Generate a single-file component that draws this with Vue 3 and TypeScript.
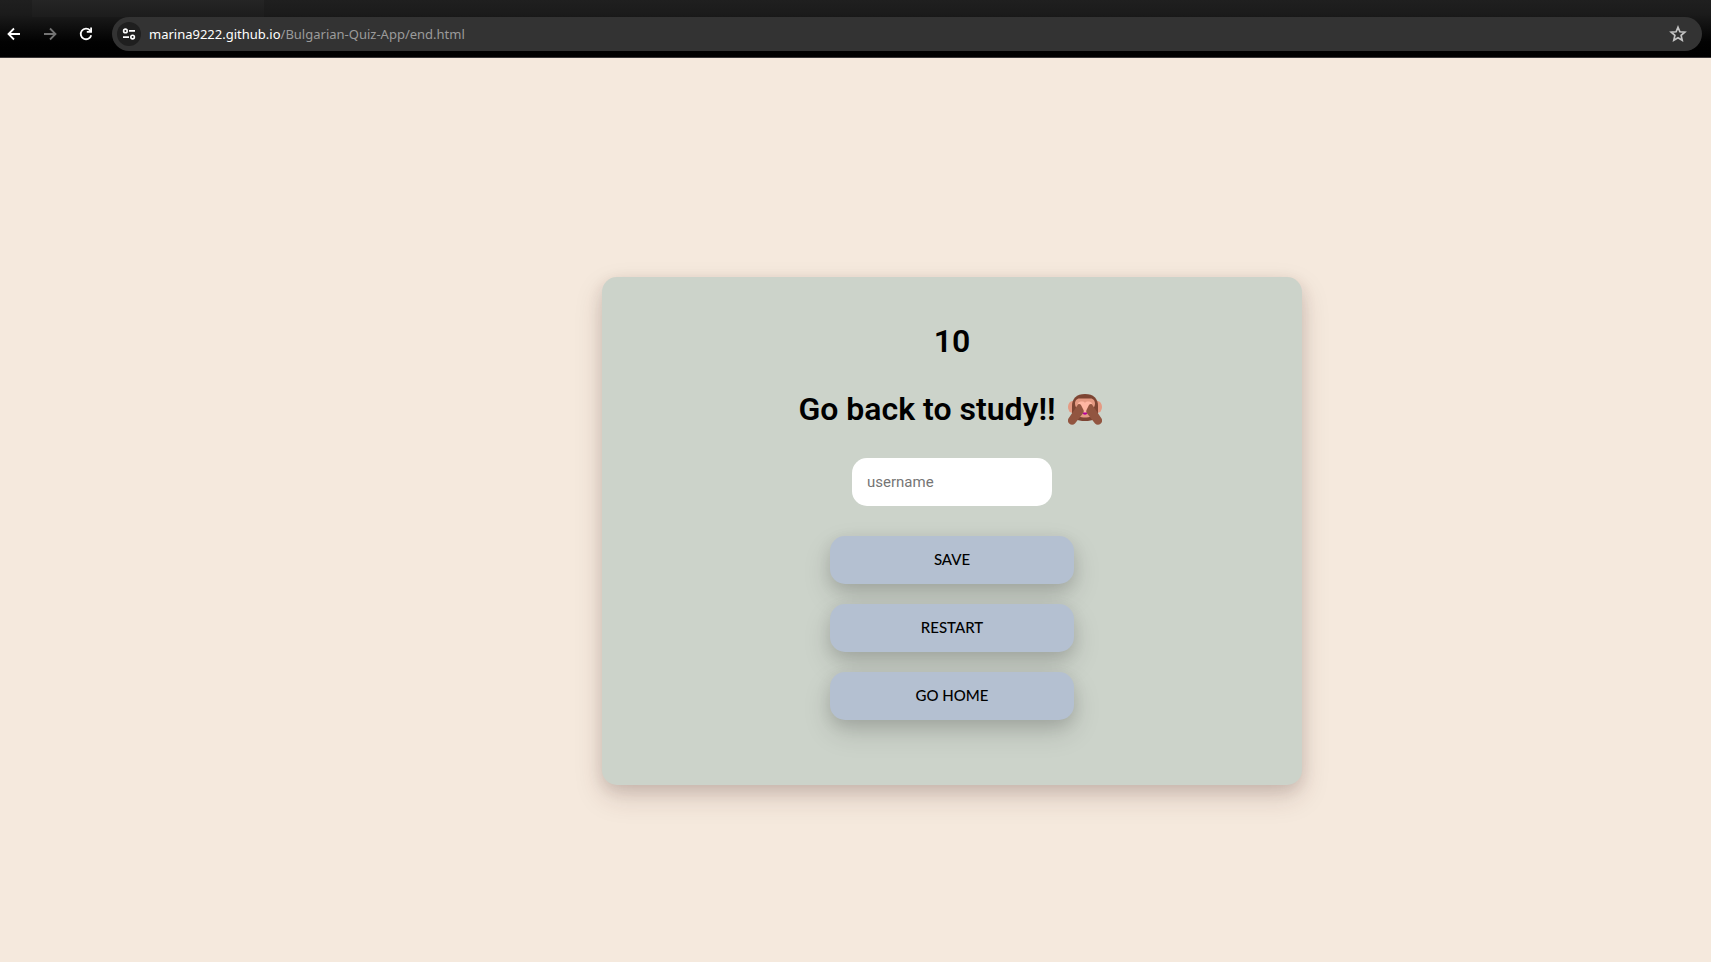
<script setup lang="ts">
import { ref } from 'vue'

const score = ref(10)
const username = ref('')
</script>

<template>
  <div class="browser">
    <header class="toolbar">
      <div class="tabstrip"><span class="tab"></span></div>
      <nav class="controls" aria-label="Browser">
        <div class="history">
          <button class="nav" type="button" aria-label="Back">
            <svg width="16" height="16" viewBox="0 0 16 16"><path d="M14 8H3M8 2.5 2.5 8 8 13.5" fill="none" stroke="#fff" stroke-width="1.8" /></svg>
          </button>
          <button class="nav" type="button" aria-label="Forward">
            <svg width="16" height="16" viewBox="0 0 16 16"><path d="M2 8h11M8 2.5 13.5 8 8 13.5" fill="none" stroke="#737373" stroke-width="1.8" /></svg>
          </button>
          <button class="nav" type="button" aria-label="Reload">
            <svg width="16" height="16" viewBox="0 0 16 16"><path d="M13.2 9.2A5.3 5.3 0 1 1 12 4.4l1 1.3" fill="none" stroke="#fff" stroke-width="1.8" /><path d="M14 1.6v5.2H8.8V5.1h3.4V1.6z" fill="#fff" /></svg>
          </button>
        </div>
        <div class="address">
          <button class="site" type="button" aria-label="View site information">
            <svg width="14" height="14" viewBox="0 0 14 14" fill="none" stroke="#fff" stroke-width="1.6"><circle cx="3.4" cy="3.9" r="1.8" /><path d="M7 3.9h6M1 10.1h6" /><circle cx="10.6" cy="10.1" r="1.8" /></svg>
          </button>
          <span class="url"><span class="host">marina9222.github.io</span>/Bulgarian-Quiz-App/end.html</span>
          <button class="star" type="button" aria-label="Bookmark this page">
            <svg width="18" height="18" viewBox="0 0 18 18"><path d="m9 2.300 1.900 4.500 4.900.4-3.700 3.200 1.100 4.800L9 12.700l-4.200 2.500 1.100-4.800-3.700-3.200 4.900-.4z" fill="none" stroke="#c4c4c4" stroke-width="1.7" /></svg>
          </button>
        </div>
      </nav>
    </header>

    <main class="page">
      <section class="card">
        <h1 class="title">{{ score }}</h1>
        <h1 class="title message">
          Go back to study!!
          <svg class="monkey" viewBox="0 0 34 31" role="img" aria-label="See-no-evil monkey">
            <ellipse cx="4.5" cy="13" rx="4.5" ry="6" fill="#e59a83" />
            <ellipse cx="29.5" cy="13" rx="4.5" ry="6" fill="#e59a83" />
            <path d="M17 0C8.500 0 4 4.500 4 12v8c0 4.700 5 7 13 7s13-2.300 13-7v-8C30 4.500 25.500 0 17 0" fill="#7d4533" />
            <path d="M11.500 4.500C8.500 4.500 7 7 7 9.500c0 2.500 1.300 4 2 6v4c0 3 3.500 4 8 4s8-1 8-4v-4c.7-2 2-3.500 2-6 0-2.500-1.500-5-4.500-5z" fill="#e59a83" />
            <path d="M17 9c-1-2-6-2-7 .5 0 2 1 3.500 2.500 4.500l2 5h5l2-5c1.500-1 2.500-2.500 2.500-4.500-1-2.500-6-2.500-7-.5" fill="#ffb7a3" />
            <path d="M14.500 18.500h5c0 1.300-1 2.200-2.500 2.200s-2.500-.9-2.500-2.200" fill="#b4009e" />
            <path d="M10 10.500c1.500-1.200 3 .2 3.500 1.500l2 4c.6 1.400.2 2.500-.7 3.500L7 29.500c-1.500 1.500-4 1.500-5.500.3-2-1.500-2-4-.7-5.800z" fill="#925540" />
            <path d="M24 10.500c-1.500-1.200-3 .2-3.500 1.500l-2 4c-.6 1.400-.2 2.500.7 3.500L27 29.500c1.500 1.500 4 1.500 5.500.3 2-1.500 2-4 .7-5.800z" fill="#925540" />
          </svg>
        </h1>
        <form class="form" @submit.prevent>
          <input v-model="username" class="field" type="text" name="username" placeholder="username" aria-label="username" />
          <button class="btn" type="submit">SAVE</button>
          <button class="btn" type="button">RESTART</button>
          <button class="btn" type="button">GO HOME</button>
        </form>
      </section>
    </main>
  </div>
</template>

<style>
body {
  margin: 0;
}
</style>

<style scoped>
.browser {
  display: flex;
  flex-direction: column;
  min-height: 100vh;
  font-family: Roboto, sans-serif;
  background: #f5e9dd;
}
.browser * {
  box-sizing: border-box;
}
button {
  border: 0;
  padding: 0;
  background: none;
}
svg {
  display: block;
}
.toolbar {
  height: 58px;
  padding-right: 9px;
  background: linear-gradient(#1f1f1f, #1b1b1b 14px, #020202 42px, #000);
  border-bottom: 1px solid #3a3738;
}
.tabstrip {
  height: 17px;
  padding-left: 32px;
}
.tab {
  display: block;
  width: 232px;
  height: 17px;
  background: linear-gradient(#252525, #1c1c1c);
}
.controls {
  display: flex;
  align-items: center;
  gap: 18px;
  padding-left: 6px;
}
.history {
  display: flex;
  gap: 20px;
}
.nav {
  width: 16px;
  height: 16px;
}
.address {
  flex: 1;
  display: flex;
  align-items: center;
  height: 34px;
  padding: 0 15px 0 5px;
  border-radius: 17px;
  background: #333;
}
.site {
  display: grid;
  place-items: center;
  width: 24px;
  height: 24px;
  border-radius: 50%;
  background: #1f1f1f;
}
.url {
  flex: 1;
  margin-left: 8px;
  font: 13px/20px "Noto Sans", "Open Sans", sans-serif;
  color: #9b9b9b;
}
.host {
  color: #fff;
}
.page {
  flex: 1;
  display: flex;
  align-items: center;
  justify-content: center;
  padding: 42px 0 0 193px;
}
.card {
  display: flex;
  flex-direction: column;
  align-items: center;
  width: 700px;
  max-width: 100%;
  padding: 40px 20px 65px;
  border-radius: 15px;
  background: #ccd3ca;
  box-shadow: 0 12px 28px rgba(70, 30, 30, 0.17), 0 5px 15px rgba(50, 30, 30, 0.12);
}
.title {
  margin: 0 0 20px;
  font-size: 32px;
  font-weight: 600;
  line-height: 48px;
  color: #000;
}
.message {
  display: flex;
  align-items: center;
  gap: 12px;
  margin-bottom: 25px;
  padding-right: 4px;
}
.monkey {
  width: 34px;
  height: 31px;
}
.form {
  display: flex;
  flex-direction: column;
  align-items: center;
  gap: 20px;
}
.field {
  width: 200px;
  height: 48px;
  margin-bottom: 10px;
  padding: 0 15px;
  border: 0;
  border-radius: 15px;
  background: #fff;
  font: 15px Roboto, sans-serif;
  color: #000;
}
.field::placeholder {
  color: #757575;
}
.btn {
  width: 244px;
  height: 48px;
  padding-bottom: 2px;
  border-radius: 15px;
  background: #b4c0d1;
  box-shadow: 0 12px 28px rgba(0, 0, 0, 0.15), 0 5px 15px rgba(0, 0, 0, 0.1);
  font: 500 15px Lato, sans-serif;
  color: #000;
}
</style>
